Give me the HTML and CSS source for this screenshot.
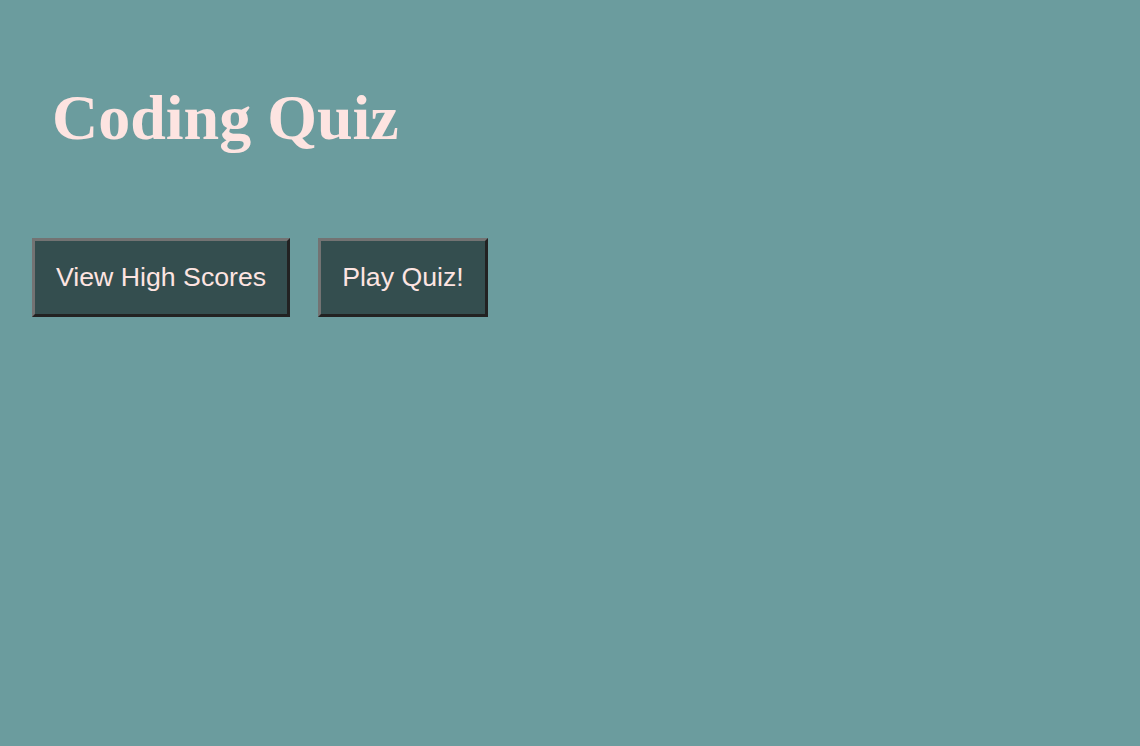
FILE: index.html
```html
<!DOCTYPE html>
<html>
<head>
<meta charset="utf-8">
<link rel="stylesheet" href="styles.css">
</head>
<body>
<header class="header">
  <h1 class="title">Coding Quiz</h1>
</header>
<main class="actions">
  <button class="btn">View High Scores</button>
  <button class="btn">Play Quiz!</button>
</main>
</body>
</html>
```
FILE: styles.css
```css
html, body {
  margin: 0;
  height: 100%;
}
body {
  background: #6b9c9e;
  font-family: "Liberation Serif", "Times New Roman", serif;
}
.header {
  padding: 82px 0 0 52px;
}
.title {
  margin: 0;
  font-size: 64px;
  font-weight: bold;
  color: #fde4e1;
  line-height: 71px;
}
.actions {
  display: flex;
  gap: 28px;
  padding-left: 32px;
  margin-top: 85px;
}
.btn {
  box-sizing: border-box;
  height: 79px;
  padding: 0 21px;
  background: #344e4f;
  color: #fde4e1;
  font-family: "Liberation Sans", Arial, sans-serif;
  font-size: 26.7px;
  border: 3px solid;
  border-color: #737373 #222222 #222222 #737373;
  cursor: pointer;
}
```
